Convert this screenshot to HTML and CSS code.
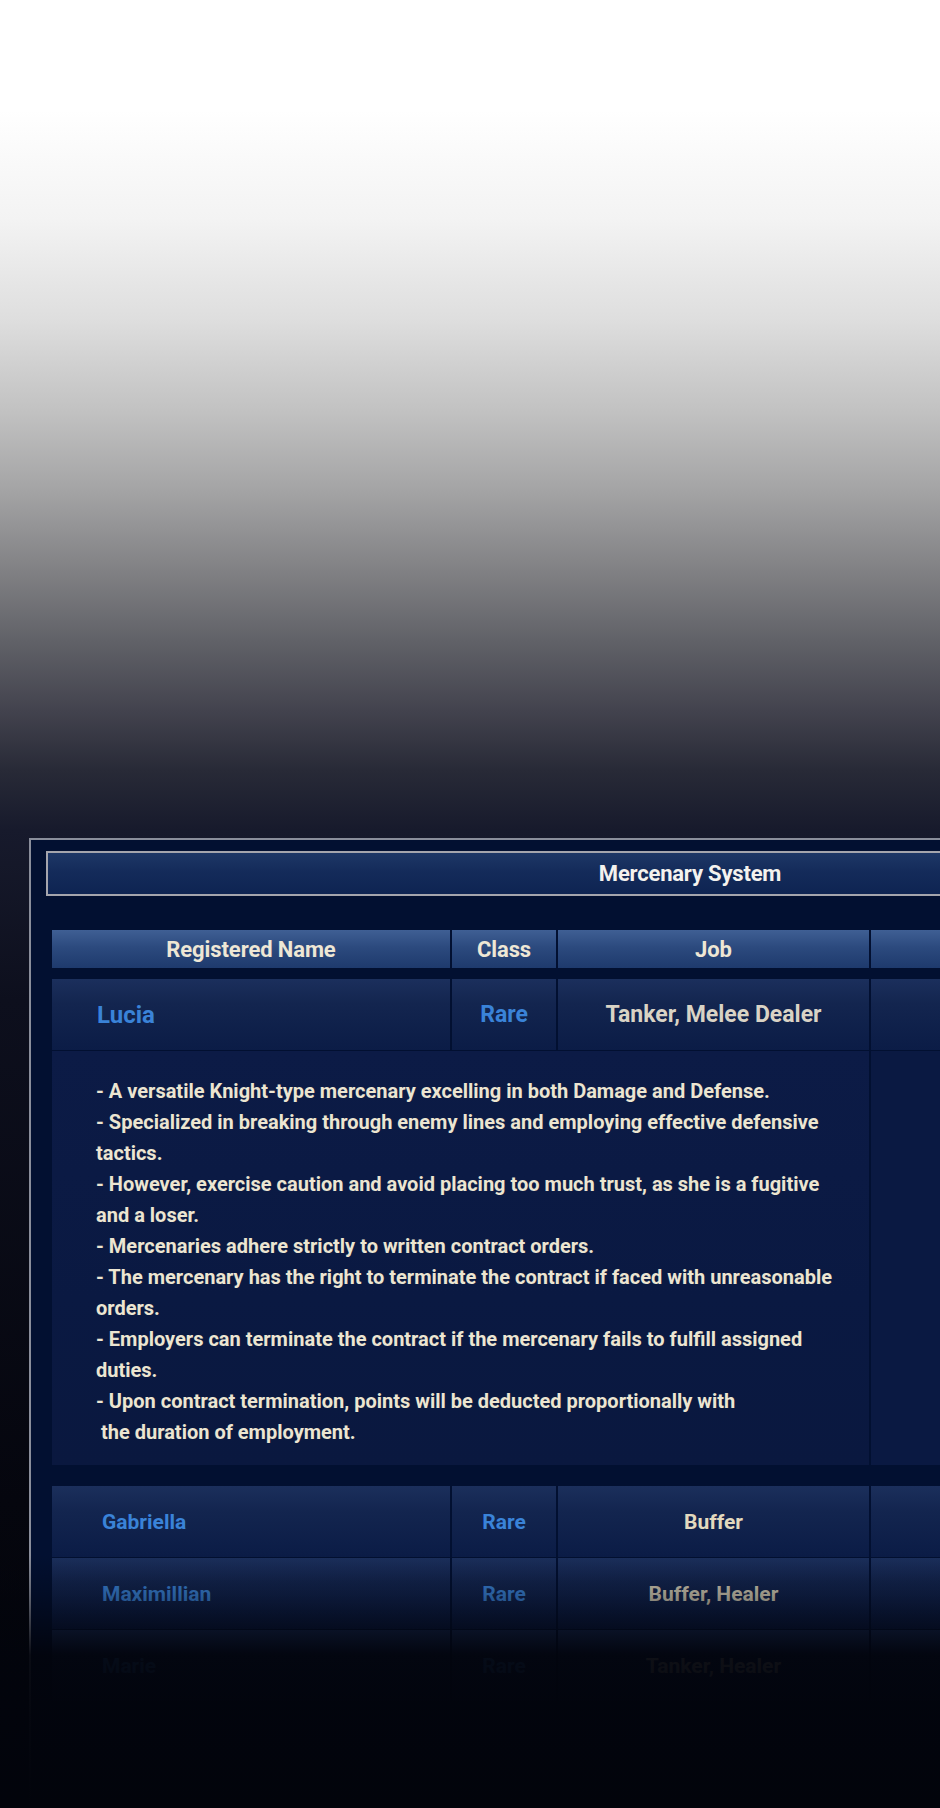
FILE: index.html
```html
<!DOCTYPE html>
<html lang="en">
<head>
  <meta charset="UTF-8" />
  <meta name="viewport" content="width=device-width, initial-scale=1.0" />
  <title>Mercenary System</title>
  <link rel="stylesheet" href="styles.css">
</head>
<body>
  <div class="page">
    <section class="panel">
      <div class="panel-title">Mercenary System</div>

      <div class="roster">
        <div class="row head-row">
          <div class="cell head">Registered Name</div>
          <div class="cell head">Class</div>
          <div class="cell head">Job</div>
          <div class="cell head"></div>
        </div>

        <div class="row merc-row selected">
          <div class="cell name">Lucia</div>
          <div class="cell grade">Rare</div>
          <div class="cell job">Tanker, Melee Dealer</div>
          <div class="cell"></div>
        </div>

        <div class="row detail-row">
          <div class="detail">
            <p>- A versatile Knight-type mercenary excelling in both Damage and Defense.</p>
            <p>- Specialized in breaking through enemy lines and employing effective defensive tactics.</p>
            <p>- However, exercise caution and avoid placing too much trust, as she is a fugitive and a loser.</p>
            <p>- Mercenaries adhere strictly to written contract orders.</p>
            <p>- The mercenary has the right to terminate the contract if faced with unreasonable orders.</p>
            <p>- Employers can terminate the contract if the mercenary fails to fulfill assigned duties.</p>
            <p>- Upon contract termination, points will be deducted proportionally with<br>&nbsp;the duration of employment.</p>
          </div>
          <div class="cell"></div>
        </div>

        <div class="list">
          <div class="row merc-row">
            <div class="cell name">Gabriella</div>
            <div class="cell grade">Rare</div>
            <div class="cell job">Buffer</div>
            <div class="cell"></div>
          </div>
          <div class="row merc-row">
            <div class="cell name">Maximillian</div>
            <div class="cell grade">Rare</div>
            <div class="cell job dim">Buffer, Healer</div>
            <div class="cell"></div>
          </div>
          <div class="row merc-row">
            <div class="cell name">Marie</div>
            <div class="cell grade">Rare</div>
            <div class="cell job dim">Tanker, Healer</div>
            <div class="cell"></div>
          </div>
        </div>
      </div>
    </section>
  </div>
  <div class="fade"></div>
</body>
</html>
```

FILE: styles.css
```css
body {
  margin: 0;
  height: 1808px;
  overflow: hidden;
  position: relative;
  font-family: Roboto, "Liberation Sans", Arial, sans-serif;
  background: linear-gradient(to bottom,
    #ffffff 0,
    #ffffff 110px,
    #f3f3f3 220px,
    #dedede 320px,
    #c2c2c2 410px,
    #a4a4a5 490px,
    #818184 570px,
    #616268 640px,
    #43434e 710px,
    #282a37 770px,
    #171a2c 830px,
    #0d0f1d 1000px,
    #05060e 1500px,
    #020308 1808px);
}
.page {
  padding: 838px 0 0 29px;
}
.panel {
  width: 1320px;
  min-height: 970px;
  padding: 11px 0 0 15px;
  border-top: 2px solid #8a8e9b;
  border-left: 2px solid #8a8e9b;
  background: #021031;
}
.panel-title {
  width: 1284px;
  height: 41px;
  line-height: 41px;
  border: 2px solid #a4a5ad;
  background: linear-gradient(to bottom, #1d3766 0, #142b5a 45%, #0e2452 100%);
  color: #f4f2ee;
  font-size: 22px;
  font-weight: 700;
  letter-spacing: -0.2px;
  text-align: center;
}
.roster {
  margin: 34px 0 0 6px;
}
.row {
  display: grid;
  grid-template-columns: 398px 104px 311px 457px;
  column-gap: 2px;
}
.cell {
  display: flex;
  align-items: center;
  justify-content: center;
}
.head-row {
  height: 38px;
  margin-bottom: 11px;
}
.head {
  background: linear-gradient(to bottom, #3f5f94 0, #2c4a7e 45%, #1e3a6d 100%);
  color: #eee7d5;
  font-size: 22px;
  font-weight: 700;
  letter-spacing: -0.1px;
}
.merc-row {
  height: 71px;
  margin-bottom: 1px;
}
.merc-row .cell {
  background: linear-gradient(to bottom, #1b2f5c 0, #13254f 35%, #0b1c46 100%);
}
.name {
  justify-content: flex-start !important;
  padding-left: 50px;
  color: #3a83d8;
  font-size: 21px;
  font-weight: 700;
}
.grade {
  color: #3a83d8;
  font-size: 21px;
  font-weight: 700;
}
.job {
  color: #e2d9be;
  font-size: 21px;
  font-weight: 700;
}
.job.dim {
  color: #d8d0b8;
}
.selected .name {
  padding-left: 45px;
  font-size: 24px;
}
.selected .grade,
.selected .job {
  font-size: 23px;
}
.selected .job {
  color: #d9d3c5;
}
.detail-row {
  margin-bottom: 21px;
}
.detail-row .cell {
  background: #0a1942;
}
.detail {
  grid-column: 1 / 4;
  padding: 25px 20px 17px 44px;
  background: linear-gradient(to bottom, #0c1b46 0, #0a1942 60%, #0a183f 100%);
  color: #ece5d1;
  font-size: 20px;
  font-weight: 700;
  line-height: 31px;
}
.detail p {
  margin: 0;
}

/* darkens the bottom of the list */
.fade {
  position: absolute;
  left: 0;
  right: 0;
  top: 1555px;
  bottom: 0;
  background: linear-gradient(to bottom,
    rgba(2, 4, 12, 0) 0,
    rgba(2, 4, 12, 0.3) 40px,
    rgba(2, 4, 12, 0.94) 100px,
    rgba(2, 4, 12, 0.98) 160px,
    #02040b 100%);
}
```
